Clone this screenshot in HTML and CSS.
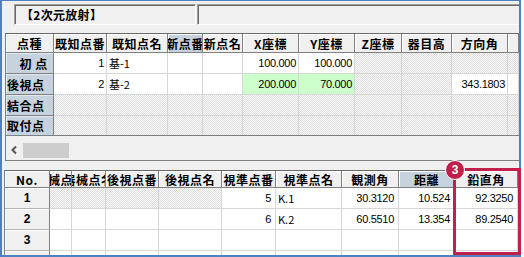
FILE: index.html
```html
<!DOCTYPE html>
<html lang="ja">
  <head>
    <meta charset="UTF-8" />
    <title>2次元放射</title>
    <link rel="stylesheet" href="styles.css">
  </head>
  <body>
    <div class="window">
      <div class="toolbar">
        <div class="field field-title">【2次元放射】</div>
        <div class="field field-rest"></div>
      </div>

      <!-- 点の一覧 -->
      <div class="pane pane-points">
        <div class="grid grid-points">
          <div class="row head">
            <div class="cell">点種</div>
            <div class="cell">既知点番</div>
            <div class="cell">既知点名</div>
            <div class="cell active">新点番</div>
            <div class="cell">新点名</div>
            <div class="cell">X座標</div>
            <div class="cell">Y座標</div>
            <div class="cell">Z座標</div>
            <div class="cell">器目高</div>
            <div class="cell">方向角</div>
            <div class="cell"></div>
          </div>
          <div class="row">
            <div class="cell kind">　初 点</div>
            <div class="cell num">1</div>
            <div class="cell txt">基-1</div>
            <div class="cell"></div>
            <div class="cell"></div>
            <div class="cell num">100.000</div>
            <div class="cell num">100.000</div>
            <div class="cell off"></div>
            <div class="cell off"></div>
            <div class="cell off"></div>
            <div class="cell off"></div>
          </div>
          <div class="row">
            <div class="cell kind">後視点</div>
            <div class="cell num">2</div>
            <div class="cell txt">基-2</div>
            <div class="cell"></div>
            <div class="cell"></div>
            <div class="cell num green">200.000</div>
            <div class="cell num green">70.000</div>
            <div class="cell off"></div>
            <div class="cell off"></div>
            <div class="cell num">343.1803</div>
            <div class="cell"></div>
          </div>
          <div class="row">
            <div class="cell kind">結合点</div>
            <div class="cell off"></div>
            <div class="cell off"></div>
            <div class="cell off"></div>
            <div class="cell off"></div>
            <div class="cell off"></div>
            <div class="cell off"></div>
            <div class="cell off"></div>
            <div class="cell off"></div>
            <div class="cell off"></div>
            <div class="cell off"></div>
          </div>
          <div class="row last">
            <div class="cell kind">取付点</div>
            <div class="cell off"></div>
            <div class="cell off"></div>
            <div class="cell off"></div>
            <div class="cell off"></div>
            <div class="cell off"></div>
            <div class="cell off"></div>
            <div class="cell off"></div>
            <div class="cell off"></div>
            <div class="cell off"></div>
            <div class="cell off"></div>
          </div>
        </div>
        <div class="hscroll">
          <svg class="arrow" width="17" height="15" viewBox="0 0 17 15">
            <polyline points="10,3.5 6.5,7 10,10.5" fill="none" stroke="#555" stroke-width="2" />
          </svg>
          <div class="thumb"></div>
        </div>
      </div>

      <div class="splitter"></div>

      <!-- 観測データ -->
      <div class="pane pane-obs">
        <div class="grid grid-obs">
          <div class="row head">
            <div class="cell">No.</div>
            <div class="cell">器械点番</div>
            <div class="cell">器械点名</div>
            <div class="cell">後視点番</div>
            <div class="cell">後視点名</div>
            <div class="cell">視準点番</div>
            <div class="cell">視準点名</div>
            <div class="cell">観測角</div>
            <div class="cell active">距離</div>
            <div class="cell">鉛直角</div>
            <div class="cell"></div>
          </div>
          <div class="row">
            <div class="cell no">1</div>
            <div class="cell off"></div>
            <div class="cell off"></div>
            <div class="cell off"></div>
            <div class="cell off"></div>
            <div class="cell num">5</div>
            <div class="cell txt">K.1</div>
            <div class="cell num">30.3120</div>
            <div class="cell num">10.524</div>
            <div class="cell num">92.3250</div>
            <div class="cell"></div>
          </div>
          <div class="row">
            <div class="cell no">2</div>
            <div class="cell"></div>
            <div class="cell"></div>
            <div class="cell"></div>
            <div class="cell"></div>
            <div class="cell num">6</div>
            <div class="cell txt">K.2</div>
            <div class="cell num">60.5510</div>
            <div class="cell num">13.354</div>
            <div class="cell num">89.2540</div>
            <div class="cell"></div>
          </div>
          <div class="row">
            <div class="cell no">3</div>
            <div class="cell"></div>
            <div class="cell"></div>
            <div class="cell"></div>
            <div class="cell"></div>
            <div class="cell"></div>
            <div class="cell"></div>
            <div class="cell"></div>
            <div class="cell"></div>
            <div class="cell"></div>
            <div class="cell"></div>
          </div>
          <div class="row">
            <div class="cell no"></div>
            <div class="cell"></div>
            <div class="cell"></div>
            <div class="cell"></div>
            <div class="cell"></div>
            <div class="cell"></div>
            <div class="cell"></div>
            <div class="cell"></div>
            <div class="cell"></div>
            <div class="cell"></div>
            <div class="cell"></div>
          </div>
        </div>
      </div>

      <!-- 注釈 -->
      <div class="callout"></div>
      <div class="badge">3</div>
    </div>
  </body>
</html>
```

FILE: styles.css
```css
body {
  margin: 0;
  background: #fff;
  font-family: "Liberation Sans", "Noto Sans CJK JP", sans-serif;
  font-size: 11px;
  color: #000;
}

.window {
  position: relative;
  width: 517px;
  height: 254px;
  border: 2px solid #4f81c1;
  border-top-width: 1px;
  background: #f0f0f0;
}

.toolbar {
  display: flex;
  gap: 1px;
  height: 32px;
  padding: 3px 0 0 12px;
  box-sizing: border-box;
}

.field {
  height: 21px;
  box-sizing: border-box;
  border: 1px solid;
  border-color: #a0a0a0 #fff #fff #a0a0a0;
  box-shadow: inset 1px 1px #696969;
  display: flex;
  align-items: center;
}

.field-title {
  width: 182px;
  padding-left: 6px;
  font: bold 12px "Noto Sans CJK JP", sans-serif;
  letter-spacing: 0.3px;
}

.field-rest {
  flex: 1;
  border-right: none;
}

.pane {
  border-top: 1px solid #696969;
  border-left: 1px solid #808080;
}

.pane-points {
  margin-left: 3px;
  border-bottom: 1px solid #808080;
}

.pane-obs {
  margin-left: 2px;
  height: 84px;
  overflow: hidden;
}

.splitter {
  height: 9px;
}

.grid .row {
  display: grid;
  height: 21px;
}

.grid-points .row {
  grid-template-columns: 48px 53px 61px 35px 40px 56px 56px 47px 50px 56px 11px;
}

.grid-points .head {
  height: 19px;
}

.grid-points .last {
  height: 19px;
}

.grid-points .last .cell {
  border-bottom: none;
}

.grid-obs .row {
  grid-template-columns: 45px 22px 34px 53px 63px 54px 66px 57px 56px 63px 1fr;
}

.grid-obs .head {
  height: 17px;
}

.cell {
  box-sizing: border-box;
  border-right: 1px solid #d6d6d6;
  border-bottom: 1px solid #d6d6d6;
  background: #fff;
  overflow: hidden;
  white-space: nowrap;
  display: flex;
  align-items: center;
}

.head .cell {
  justify-content: center;
  background: #f0f0f0;
  border-color: #808080;
  box-shadow: inset 1px 1px #fff;
  font: bold 12px "Noto Sans CJK JP", sans-serif;
  letter-spacing: 0.5px;
}

.head .cell.active {
  background: #c6d2de;
}

.cell.kind {
  background: #c6d2de;
  border-color: #808080;
  box-shadow: inset 1px 1px #e4eaf0;
  padding-left: 1px;
  font: bold 12px "Noto Sans CJK JP", sans-serif;
  letter-spacing: 0.5px;
}

.cell.no {
  justify-content: center;
  background: #f0f0f0;
  border-right-color: #808080;
  border-bottom-color: #b4b4b4;
  box-shadow: inset 1px 1px #fff;
  font: bold 12px "Liberation Sans", sans-serif;
}

.cell.num {
  justify-content: flex-end;
  padding-right: 2px;
  letter-spacing: -0.3px;
}

.grid-obs .cell.num {
  padding-right: 4px;
}

.cell.txt {
  padding-left: 2px;
  font-family: "Noto Sans CJK JP", sans-serif;
}

.cell.green {
  background: #ccffcc;
}

.cell.off {
  background: repeating-conic-gradient(#dedede 0 25%, #fafafa 0 50%) 0 0 / 2px 2px;
}

.hscroll {
  height: 24px;
  border-top: 1px solid #808080;
  display: flex;
  align-items: flex-start;
  padding-top: 7px;
  box-sizing: content-box;
  height: 17px;
}

.thumb {
  width: 46px;
  height: 15px;
  background: #cdcdcd;
}

.callout {
  position: absolute;
  left: 451px;
  top: 167px;
  width: 68px;
  height: 87px;
  box-sizing: border-box;
  border: 3px solid #c2204c;
}

.badge {
  position: absolute;
  left: 443px;
  top: 159px;
  width: 20px;
  height: 20px;
  box-sizing: border-box;
  border: 1px solid #fff;
  border-radius: 50%;
  background: #c2204c;
  color: #fff;
  font: bold 12px "Liberation Sans", sans-serif;
  display: flex;
  align-items: center;
  justify-content: center;
}
```
